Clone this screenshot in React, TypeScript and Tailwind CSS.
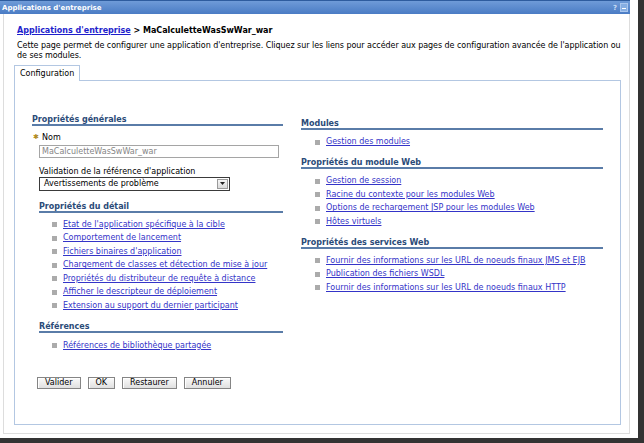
import React from "react";

const font = { fontFamily: '"DejaVu Sans", Verdana, sans-serif' };

function Header({ children }: { children: React.ReactNode }) {
  return (
    <div className="font-bold text-[8px] leading-[8px] text-[#2b4b78] border-b-2 border-[#5a7ca8] whitespace-nowrap">
      {children}
    </div>
  );
}

function Item({ children }: { children: React.ReactNode }) {
  return (
    <div className="flex items-center h-[13.5px] leading-[13.5px]">
      <span className="w-[5px] h-[5px] bg-[#ababab] mr-[6px] shrink-0" />
      <a className="text-[#3434c8] underline whitespace-nowrap cursor-pointer">{children}</a>
    </div>
  );
}

function Btn({ children }: { children: React.ReactNode }) {
  return (
    <button className="h-[12px] px-[7px] border border-[#858585] bg-gradient-to-b from-[#fafafa] to-[#e0e0e0] text-[8px] leading-[10px] text-black shadow-[inset_1px_1px_0_#ffffff]">
      {children}
    </button>
  );
}

export default function App() {
  return (
    <div className="w-[644px] h-[443px] bg-white overflow-hidden text-[8px] text-black" style={font}>
      <div className="w-[644px] h-[443px] border-r-[6px] border-b-[5px] border-r-[#333333] border-b-[#333333] flex flex-col">
        {/* Title bar */}
        <div className="w-[630px] h-[14px] shrink-0 bg-gradient-to-b from-[#6f9bd8] to-[#4a7cc4] border-t border-[#2e5c9e] flex items-center justify-between pl-[2px] pr-[2px]">
          <span className="text-white font-bold text-[7px] leading-[10px] whitespace-nowrap">Applications d'entreprise</span>
          <div className="flex items-center gap-[3px]">
            <span className="text-[#c9dcf4] font-bold text-[7px] leading-[8px]">?</span>
            <span className="w-[8px] h-[9px] bg-[#86aee2] border border-[#a9c6ee] flex items-end justify-center pb-[2px]">
              <span className="w-[4px] h-[1px] bg-white" />
            </span>
          </div>
        </div>
        {/* Body */}
        <div className="ml-[3px] w-[627px] h-[420px] border-l border-r border-b border-[#dddddd] pl-[10px] pt-[11px] flex flex-col">
          <div className="pl-[3px] font-bold text-[8px] leading-[12px] whitespace-nowrap">
            <a className="text-[#1f1fcc] underline cursor-pointer">Applications d'entreprise</a>
            <span> &gt; MaCalculetteWasSwWar_war</span>
          </div>
          <div className="pl-[3px] mt-[4px] leading-[10px] whitespace-nowrap tracking-[-0.05px]">
            Cette page permet de configurer une application d'entreprise. Cliquez sur les liens pour accéder aux pages de configuration avancée de l'application ou
            <br />
            de ses modules.
          </div>
          {/* Tab */}
          <div className="mt-[4px] flex">
            <div className="h-[16px] px-[5px] border border-b-0 border-[#b3c7e2] bg-white leading-[15px] -mb-px relative z-10">
              Configuration
            </div>
          </div>
          <div className="w-[607px] h-[345px] border border-[#b3c7e2] flex pl-[17px]">
            {/* Left column */}
            <div className="w-[251px] pt-[35px] flex flex-col">
              <Header>Propriétés générales</Header>
              <div className="mt-[5.5px] h-[11px] leading-[11px] flex items-center whitespace-nowrap">
                <span className="ml-[1px] w-[9px] text-[#b08a22] text-[7px]">✱</span>
                <span>Nom</span>
              </div>
              <div className="ml-[7px] mt-[2.5px] w-[240px] h-[13px] border border-[#a5a5a5] bg-white text-[#858585] leading-[11px] pl-[2px] whitespace-nowrap">
                MaCalculetteWasSwWar_war
              </div>
              <div className="ml-[7px] mt-[7.5px] h-[11px] leading-[11px] whitespace-nowrap">
                Validation de la référence d'application
              </div>
              <div className="ml-[7px] mt-0 w-[191px] h-[14px] border border-[#3a3a3a] bg-white flex items-center justify-between pl-[4px] pr-[1px]">
                <span className="leading-[12px] whitespace-nowrap">Avertissements de problème</span>
                <span className="w-[11px] h-[10px] border border-[#9a9a9a] bg-gradient-to-b from-[#f6f6f6] to-[#dadada] flex items-center justify-center">
                  <svg width="5" height="3" viewBox="0 0 5 3">
                    <path d="M0 0 L5 0 L2.5 3 Z" fill="#222" />
                  </svg>
                </span>
              </div>
              <div className="ml-[7px] mt-[12px]">
                <Header>Propriétés du détail</Header>
                <div className="mt-[5.25px] pl-[13px]">
                  <Item>Etat de l'application spécifique à la cible</Item>
                  <Item>Comportement de lancement</Item>
                  <Item>Fichiers binaires d'application</Item>
                  <Item>Chargement de classes et détection de mise à jour</Item>
                  <Item>Propriétés du distributeur de requête à distance</Item>
                  <Item>Afficher le descripteur de déploiement</Item>
                  <Item>Extension au support du dernier participant</Item>
                </div>
                <div className="mt-[10.25px]">
                  <Header>Références</Header>
                </div>
                <div className="mt-[6.25px] pl-[13px]">
                  <Item>Références de bibliothèque partagée</Item>
                </div>
              </div>
              <div className="mt-[25px] ml-[5px] flex gap-[7px]">
                <Btn>Valider</Btn>
                <Btn>OK</Btn>
                <Btn>Restaurer</Btn>
                <Btn>Annuler</Btn>
              </div>
            </div>
            {/* Right column */}
            <div className="ml-[18px] w-[302px] pt-[39px] flex flex-col">
              <Header>Modules</Header>
              <div className="mt-[5.25px] pl-[14px]">
                <Item>Gestion des modules</Item>
              </div>
              <div className="mt-[10.25px]">
                <Header>Propriétés du module Web</Header>
              </div>
              <div className="mt-[5.25px] pl-[14px]">
                <Item>Gestion de session</Item>
                <Item>Racine du contexte pour les modules Web</Item>
                <Item>Options de rechargement JSP pour les modules Web</Item>
                <Item>Hôtes virtuels</Item>
              </div>
              <div className="mt-[10.25px]">
                <Header>Propriétés des services Web</Header>
              </div>
              <div className="mt-[5.25px] pl-[14px]">
                <Item>Fournir des informations sur les URL de noeuds finaux JMS et EJB</Item>
                <Item>Publication des fichiers WSDL</Item>
                <Item>Fournir des informations sur les URL de noeuds finaux HTTP</Item>
              </div>
            </div>
          </div>
        </div>
      </div>
    </div>
  );
}
